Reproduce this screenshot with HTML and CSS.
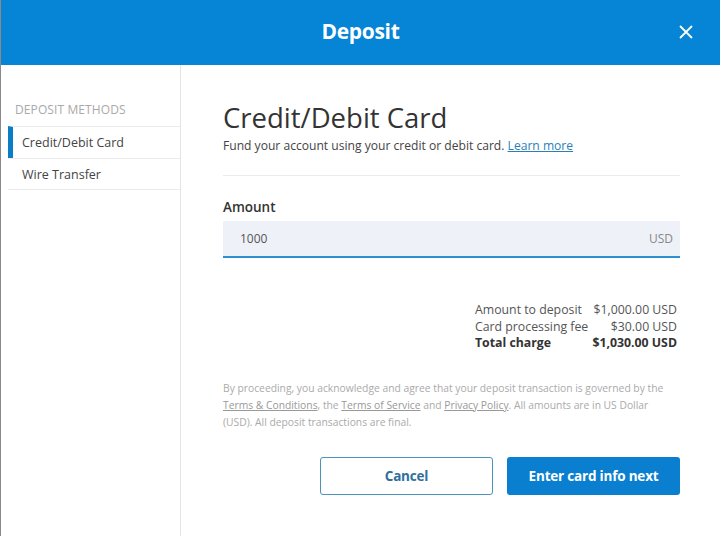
FILE: index.html
```html
<!DOCTYPE html>
<html>
<head>
<meta charset="utf-8">
<link rel="stylesheet" href="styles.css">
</head>
<body>
<div class="modal">
  <header class="head">
    <h1 class="head-title">Deposit</h1>
    <button class="close" aria-label="Close">
      <svg width="14" height="14" viewBox="0 0 14 14"><path d="M1 1L13 13M13 1L1 13" stroke="#fff" stroke-width="1.8" fill="none"/></svg>
    </button>
  </header>
  <div class="body">
    <aside class="side">
      <div class="side-title">DEPOSIT METHODS</div>
      <ul class="methods">
        <li class="method active">Credit/Debit Card</li>
        <li class="method">Wire Transfer</li>
      </ul>
    </aside>
    <main class="main">
      <h2 class="title">Credit/Debit Card</h2>
      <p class="sub">Fund your account using your credit or debit card. <a href="#" class="link">Learn more</a></p>
      <div class="divider"></div>
      <label class="label">Amount</label>
      <div class="input">
        <span class="val">1000</span>
        <span class="cur">USD</span>
      </div>
      <div class="summary">
        <div class="row"><span>Amount to deposit</span><span>$1,000.00 USD</span></div>
        <div class="row"><span>Card processing fee</span><span>$30.00 USD</span></div>
        <div class="row total"><span>Total charge</span><span>$1,030.00 USD</span></div>
      </div>
      <p class="legal">By proceeding, you acknowledge and agree that your deposit transaction is governed by the <a href="#">Terms &amp; Conditions</a>, the <a href="#">Terms of Service</a> and <a href="#">Privacy Policy</a>. All amounts are in US Dollar (USD). All deposit transactions are final.</p>
      <div class="actions">
        <button class="btn btn-out">Cancel</button>
        <button class="btn btn-fill">Enter card info next</button>
      </div>
    </main>
  </div>
</div>
</body>
</html>
```
FILE: styles.css
```css
* { box-sizing: border-box; }
html, body { margin: 0; padding: 0; }
body {
  width: 720px;
  height: 536px;
  overflow: hidden;
  background: #fff;
  font-family: "Open Sans", "Liberation Sans", sans-serif;
  color: #333;
}
.modal {
  width: 720px;
  height: 536px;
  display: flex;
  flex-direction: column;
  border-left: 1px solid #8a8a8a;
}
.head {
  height: 65px;
  flex: none;
  background: #0684d6;
  display: flex;
  align-items: center;
  justify-content: center;
  position: relative;
}
.head-title {
  margin: 0;
  color: #fff;
  font-size: 21px;
  font-weight: 700;
  letter-spacing: -0.3px;
  padding-bottom: 3px;
}
.close {
  position: absolute;
  right: 27px;
  top: 25px;
  width: 14px;
  height: 14px;
  padding: 0;
  border: 0;
  background: none;
  display: flex;
}
.body {
  flex: 1;
  display: flex;
}
.side {
  width: 180px;
  flex: none;
  border-right: 1px solid #e4e4e4;
  padding: 37px 0 0 7px;
}
.side-title {
  font-size: 12px;
  color: #a9a9a9;
  padding-left: 7px;
  letter-spacing: 0.1px;
  line-height: 16px;
  margin-bottom: 8px;
}
.methods {
  list-style: none;
  margin: 0;
  padding: 0;
}
.method {
  height: 32px;
  border-top: 1px solid #ececec;
  padding-left: 14px;
  font-size: 12.5px;
  color: #444;
  display: flex;
  align-items: center;
}
.method:last-child { border-bottom: 1px solid #ececec; }
.method.active {
  border-left: 5px solid #0a7dc7;
  padding-left: 9px;
}
.main {
  flex: 1;
  padding: 35px 40px 0 42px;
}
.title {
  margin: 0;
  font-size: 27.5px;
  font-weight: 400;
  color: #333;
  line-height: 36px;
}
.sub {
  margin: 1px 0 0;
  font-size: 12.1px;
  color: #444;
  line-height: 18px;
}
.link {
  color: #2b7fb8;
  text-decoration: underline;
}
.divider {
  height: 1px;
  background: #eaeaea;
  margin-top: 20px;
}
.label {
  display: block;
  margin-top: 21px;
  font-size: 13.5px;
  font-weight: 600;
  color: #333;
  line-height: 20px;
}
.input {
  margin-top: 4px;
  height: 37px;
  background: #eef1f7;
  border-bottom: 2px solid #2d8fcf;
  display: flex;
  align-items: center;
  justify-content: space-between;
  padding: 0 7px 0 17px;
  font-size: 12px;
  color: #555;
}
.cur { color: #888; }
.summary {
  margin: 44px 3px 0 auto;
  width: 202px;
  font-size: 12.3px;
  line-height: 16.5px;
  color: #555;
}
.row {
  display: flex;
  justify-content: space-between;
}
.row.total {
  font-weight: 700;
  color: #333;
}
.legal {
  margin: 28px 0 0;
  font-size: 10.3px;
  line-height: 17px;
  color: #aaa;
}
.legal a { color: #999; text-decoration: underline; }
.actions {
  margin-top: 26px;
  display: flex;
  justify-content: flex-end;
  gap: 14px;
}
.btn {
  width: 173px;
  height: 38px;
  border-radius: 3px;
  font-family: "Open Sans", "Liberation Sans", sans-serif;
  font-size: 13.5px;
  font-weight: 700;
  letter-spacing: -0.2px;
}
.btn-out {
  background: #fff;
  border: 1px solid #4a93bd;
  color: #2f6f9e;
}
.btn-fill {
  background: #0a7fcf;
  border: 0;
  color: #fff;
}
```
